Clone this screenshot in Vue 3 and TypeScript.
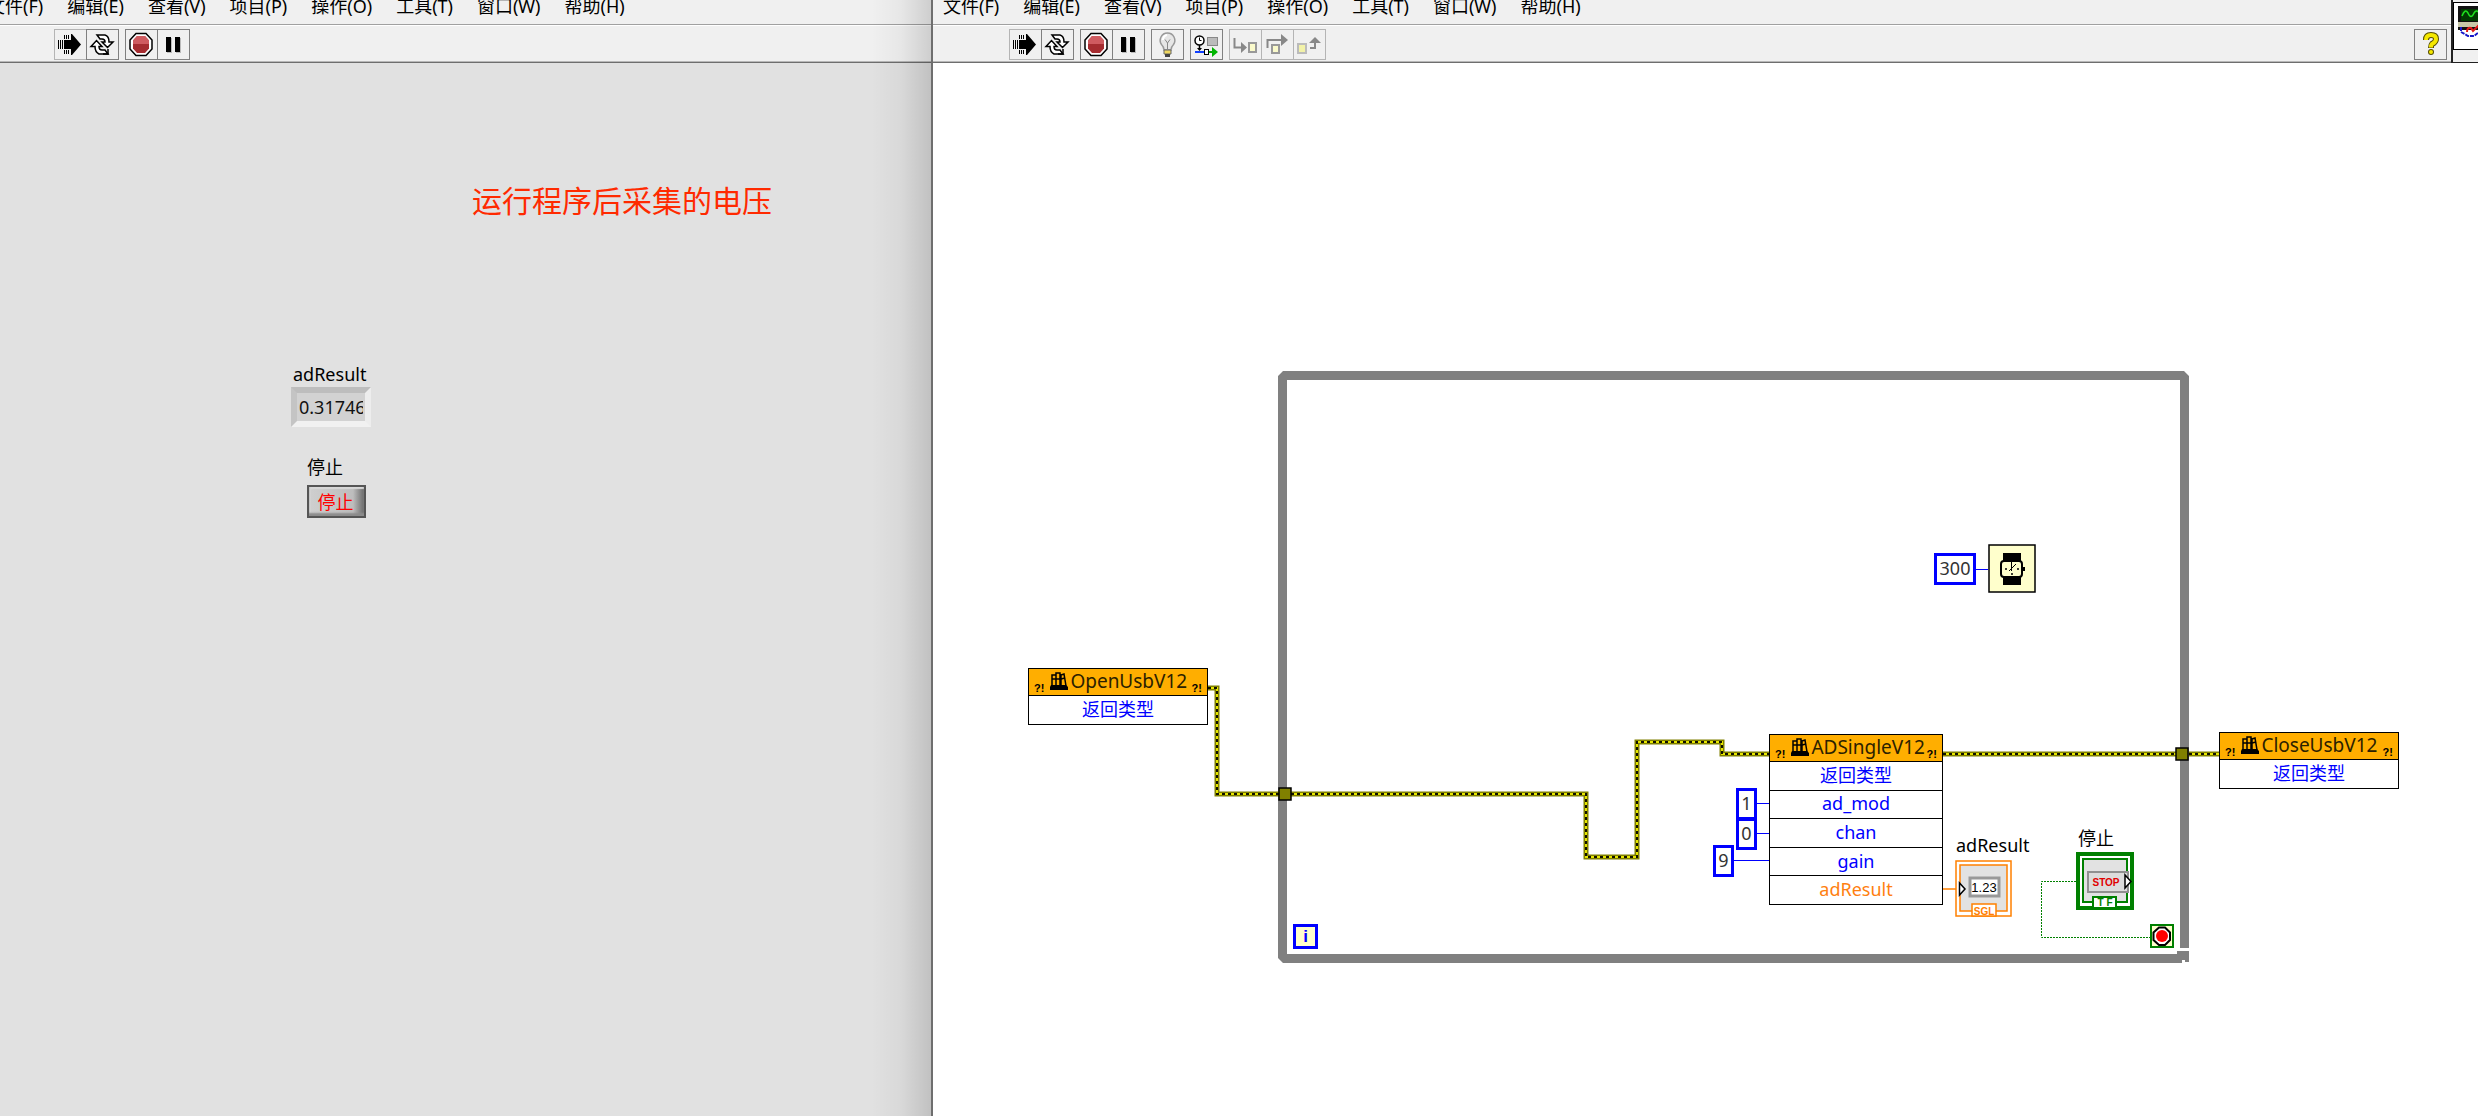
<script setup lang="ts">
interface ToolButton {
  icon: string
  label: string
  state?: 'dim' | 'flat'
}

interface VeeWindow {
  id: string
  menus: string[]
  groups: ToolButton[][]
}

interface Row {
  text: string
  tone: 'int' | 'float'
}

interface CallNode {
  title: string
  x: number
  y: number
  width: number
  height: number
  rows: Row[]
}

interface Constant {
  value: string
  x: number
  y: number
  width: number
}

const menus = ['文件(F)', '编辑(E)', '查看(V)', '项目(P)', '操作(O)', '工具(T)', '窗口(W)', '帮助(H)']

const runGroup: ToolButton[] = [
  { icon: 'run', label: '运行', state: 'flat' },
  { icon: 'loop', label: '连续运行' },
]
const stopGroup: ToolButton[] = [
  { icon: 'abort', label: '中止执行' },
  { icon: 'pause', label: '暂停' },
]

const windows: VeeWindow[] = [
  { id: 'panel', menus, groups: [runGroup, stopGroup] },
  {
    id: 'diagram',
    menus,
    groups: [
      runGroup,
      stopGroup,
      [{ icon: 'bulb', label: '高亮显示执行过程' }],
      [{ icon: 'retain', label: '保存连线值' }],
      [
        { icon: 'into', label: '单步步入', state: 'dim' },
        { icon: 'over', label: '单步步过', state: 'dim' },
        { icon: 'out', label: '单步步出', state: 'dim' },
      ],
    ],
  },
]

const ret: Row = { text: '返回类型', tone: 'int' }

const nodes: CallNode[] = [
  { title: 'OpenUsbV12', x: 95, y: 605, width: 180, height: 57, rows: [ret] },
  {
    title: 'ADSingleV12',
    x: 836,
    y: 671,
    width: 174,
    height: 171,
    rows: [
      ret,
      { text: 'ad_mod', tone: 'int' },
      { text: 'chan', tone: 'int' },
      { text: 'gain', tone: 'int' },
      { text: 'adResult', tone: 'float' },
    ],
  },
  { title: 'CloseUsbV12', x: 1286, y: 669, width: 180, height: 57, rows: [ret] },
]

const constants: Constant[] = [
  { value: '300', x: 1001, y: 490, width: 42 },
  { value: '1', x: 803, y: 725, width: 21 },
  { value: '0', x: 803, y: 755, width: 21 },
  { value: '9', x: 780, y: 782, width: 21 },
]

const refWires = [
  'M275 625H284V731H346',
  'M358 731H653V794H704V679H789V691H836',
  'M1010 691H1243',
  'M1256 691H1286',
]

const px = (n: number) => `${n}px`
</script>

<template>
  <main class="desk">
    <section v-for="win in windows" :key="win.id" class="window" :class="win.id">
      <header class="head">
        <div class="bars">
          <nav class="menubar">
            <button v-for="m in win.menus" :key="m" type="button" class="menu">{{ m }}</button>
          </nav>
          <div class="toolbar">
            <div v-for="(group, g) in win.groups" :key="g" class="group">
              <button
                v-for="b in group"
                :key="b.icon"
                type="button"
                class="tool"
                :class="b.state"
                :aria-label="b.label"
              >
                <svg width="31" height="29" viewBox="1 1 31 29">
                  <g v-if="b.icon === 'run'">
                    <path d="M10 11H17V5H18L27 15.500L18 26H17V20H10Z" />
                    <path d="M4.500 11V20M6.500 11V20M8.500 11V20M10.500 6V10M12.500 6V10M14.500 6V10M10.500 21V25M12.500 21V25M14.500 21V25" stroke="#000" />
                  </g>
                  <g v-else-if="b.icon === 'loop'" fill="#fff" stroke="#000" stroke-width="1.500">
                    <path d="M11 6H19Q23 7 23 13H27L21.500 18.500L16 13H19Q19 10 16 10H14Z" />
                    <path d="M22 25H13Q9 23 9 17.500H5L10.500 11.500L16 17.500H13Q13 21 16 21H19Z" />
                    <path d="M22 20V25H17" fill="none" />
                  </g>
                  <g v-else-if="b.icon === 'abort'">
                    <path d="M11 4.500H21L27 11V20L21 26.500H11L5 20V11Z" fill="#fff" stroke="#000" stroke-width="1.500" />
                    <path d="M12 7H20L24 11.500V19.500L20 24H12L8 19.500V11.500Z" fill="#a52c30" />
                    <path d="M12 7H20L24 11.500V15H8V11.500Z" fill="#cf5b60" />
                  </g>
                  <g v-else-if="b.icon === 'pause'">
                    <path d="M10 9H15V24H10ZM19 9H24V24H19Z" fill="#bbb" />
                    <path d="M9 8H14V23H9ZM18 8H23V23H18Z" />
                  </g>
                  <g v-else-if="b.icon === 'bulb'">
                    <path d="M13 21Q13 18 10.500 15.500Q8 12 10 8Q12 4 16.500 4Q21 4 23 8Q25 12 22.500 15.500Q20 18 20 21Z" fill="#e6e6e6" stroke="#999" stroke-width="1.500" />
                    <path d="M12 11Q12 7 16 6" fill="none" stroke="#fff" stroke-width="2" />
                    <path d="M16.500 20V14L14 10.500M16.500 14L19 10.500" fill="none" stroke="#888" />
                    <path d="M13 21H20V25H13Z" fill="#f0d860" stroke="#666" />
                    <path d="M14 25H19V28H14Z" fill="#444" />
                  </g>
                  <g v-else-if="b.icon === 'retain'">
                    <circle cx="9.500" cy="11.500" r="4.500" fill="#fff" stroke="#000" stroke-width="1.500" />
                    <path d="M9.500 8.500V11.500H11.500" fill="none" stroke="#000" />
                    <path d="M9.500 16V21" stroke="#000" stroke-width="1.500" />
                    <path d="M7 19H12L9.500 22Z" />
                    <rect x="17.500" y="8.500" width="10" height="8" fill="#bbb" stroke="#888" />
                    <path d="M5 23H14" stroke="#1040ff" stroke-width="2" />
                    <path d="M19 23H24" stroke="#0a0" stroke-width="2" />
                    <rect x="14.500" y="20.500" width="4" height="5" fill="#fff" stroke="#000" />
                    <path d="M22 18L28 23L22 28Z" fill="#00b400" />
                  </g>
                  <g v-else-if="b.icon === 'into'">
                    <path d="M5.500 9V18.500H14" fill="none" stroke="#888" stroke-width="2" />
                    <path d="M12 13L18 18.500L12 24Z" fill="#888" />
                    <rect x="20" y="14" width="7" height="9" fill="#fafacb" stroke="#999" stroke-width="2" />
                  </g>
                  <g v-else-if="b.icon === 'over'">
                    <path d="M6.500 19V11H21" fill="none" stroke="#888" stroke-width="2" />
                    <path d="M20 5L27 11L20 17Z" fill="#888" />
                    <rect x="11" y="16" width="7" height="8" fill="#fafacb" stroke="#999" stroke-width="2" />
                  </g>
                  <g v-else>
                    <path d="M17 19H22V12" fill="none" stroke="#888" stroke-width="2" />
                    <path d="M16 14L22 8L28 14Z" fill="#888" />
                    <rect x="5" y="15" width="8" height="9" fill="#f2f2a8" stroke="#bbb" stroke-width="2" />
                  </g>
                </svg>
              </button>
            </div>
            <button v-if="win.id === 'diagram'" type="button" class="tool help" aria-label="即时帮助">
              <svg width="31" height="29" viewBox="1 1 31 29">
                <path d="M12 11Q12 6 17 6Q22 6 22 10Q22 13 18 15Q17 16 17 19" fill="none" stroke="#554d00" stroke-width="6" />
                <circle cx="17" cy="23" r="3" fill="#554d00" />
                <path d="M12 11Q12 6 17 6Q22 6 22 10Q22 13 18 15Q17 16 17 18.500" fill="none" stroke="#f5e800" stroke-width="4" />
                <circle cx="17" cy="23" r="2" fill="#f5e800" />
              </svg>
            </button>
          </div>
        </div>
        <div v-if="win.id === 'diagram'" class="vi-icon">
          <svg width="25" height="46" viewBox="0 0 25 46">
            <rect x="4" y="3" width="24" height="24" fill="#111" />
            <rect x="4" y="19" width="24" height="5" fill="#c8c8a8" />
            <rect x="7" y="6" width="20" height="12" fill="#013a01" />
            <path d="M8 13Q11 5 14 10Q17 17 20 10Q23 5 26 12" fill="none" stroke="#1fe01f" stroke-width="1.500" />
            <path d="M7 24V29L14 33H20L25 29" fill="none" stroke="#1717c8" stroke-width="2" stroke-dasharray="4 1" />
            <path d="M13 29Q13 24 17 25L19 28L25 22" fill="none" stroke="#e01818" stroke-width="2" />
          </svg>
        </div>
      </header>

      <div v-if="win.id === 'panel'" class="surface front">
        <p class="note">运行程序后采集的电压</p>
        <div class="indicator">
          <label for="ad-result">adResult</label>
          <input id="ad-result" type="text" value="0.317466" readonly />
        </div>
        <div class="stop-control">
          <label for="stop">停止</label>
          <button id="stop" type="button">停止</button>
        </div>
      </div>

      <div v-else class="surface">
        <svg class="wires" width="1545" height="1053" viewBox="0 0 1545 1053" fill="none">
          <path d="M350 308H1251L1256 313V885H1247V317H354V891H1244V888H1256V899H1252V897H1249V900H350L345 895V313Z" fill="#808080" />
          <g v-for="d in refWires" :key="d">
            <path :d="d" stroke="#808000" stroke-width="5" />
            <path :d="d" stroke="#e8e800" stroke-width="2" />
            <path :d="d" stroke="#111100" stroke-width="2" stroke-dasharray="3 3" />
          </g>
          <g fill="#808000" stroke="#000" stroke-width="1.500">
            <rect x="346" y="725" width="12" height="12" />
            <rect x="1243" y="685" width="12" height="12" />
          </g>
          <path d="M1043 506.500H1055M824 740.500H836M824 770.500H836M801 797.500H836" stroke="#0000ff" />
          <path d="M1010 826H1023" stroke="#ff8000" stroke-width="1.500" />
          <path d="M1143 818.500H1108.500V874.500H1217" stroke="#008000" stroke-dasharray="2 1" />

          <g>
            <rect x="1056" y="482" width="46" height="47" fill="#ffffcc" stroke="#000" stroke-width="1.500" />
            <rect x="1070" y="490" width="18" height="32" fill="#000" />
            <rect x="1068" y="498" width="21" height="16" rx="3" fill="#ffffcc" stroke="#000" stroke-width="2" />
            <path d="M1078.500 499V508M1076 508L1083 501" stroke="#000" />
            <path d="M1072 506H1074M1084 506H1086M1078 511H1080" stroke="#000" stroke-width="1.500" />
            <path d="M1090 504H1092V508H1090Z" fill="#000" />
          </g>

          <g stroke="#ff8000" stroke-width="1.500">
            <rect x="1023" y="798" width="55" height="55" fill="#fff" />
            <rect x="1027" y="802" width="47" height="46" fill="#e2e2e2" />
            <rect x="1039" y="841" width="24" height="12" fill="#fff" />
          </g>
          <rect x="1037" y="815" width="29" height="18" fill="#fff" stroke="#999" stroke-width="3" />
          <path d="M1026.500 820V832L1032 826Z" fill="#fff" stroke="#000" stroke-width="1.500" />

          <rect x="1145" y="791" width="54" height="54" fill="#fff" stroke="#008000" stroke-width="4" />
          <rect x="1150" y="796" width="44" height="43" fill="#e2e2e2" stroke="#008000" stroke-width="2" />
          <rect x="1160" y="834" width="23" height="10" fill="#fff" />
          <path d="M1160 844V834H1183V844" stroke="#008000" stroke-width="2" />
          <rect x="1155" y="809" width="40" height="20" fill="#dcdcdc" stroke="#909090" stroke-width="2" />
          <path d="M1192 812V825L1198 818.500Z" fill="#fff" stroke="#000" stroke-width="1.500" />

          <rect x="1218" y="862" width="22" height="22" fill="#ffffcc" stroke="#008000" stroke-width="2" />
          <path d="M1226 864.500H1232L1237 869.500V877L1232 882H1226L1220.500 877V869.500Z" fill="#fff" stroke="#000" stroke-width="2" />
          <circle cx="1229" cy="873" r="6" fill="#ff0000" />

          <g class="glyphs">
            <text x="1051" y="829" font-size="13" fill="#000">1.23</text>
            <text x="1051" y="852" font-size="10" font-weight="700" fill="#ff8000">SGL</text>
            <text x="1173" y="823" font-size="10" font-weight="700" fill="#e00000">STOP</text>
            <text x="1172" y="843" font-size="10" font-weight="700" fill="#008000">T F</text>
          </g>
        </svg>

        <div
          v-for="n in nodes"
          :key="n.title"
          class="node"
          :style="{ left: px(n.x), top: px(n.y), width: px(n.width), height: px(n.height) }"
        >
          <div class="node-head">
            <b class="flag">?!</b>
            <svg width="18" height="18" viewBox="0 0 18 18">
              <path d="M2 3H6V14H2ZM6 1H10V14H6ZM11 3L14 2L16 14H11Z" fill="none" stroke="#000" stroke-width="1.500" />
              <path d="M2 7H10M11 7L15 6" stroke="#000" stroke-width="1.500" />
              <path d="M1 13H16L18 15V18H0V15Z" />
            </svg>
            <span>{{ n.title }}</span>
            <b class="flag end">?!</b>
          </div>
          <div v-for="r in n.rows" :key="r.text" class="node-row" :class="r.tone">{{ r.text }}</div>
        </div>

        <span
          v-for="c in constants"
          :key="c.value"
          class="constant"
          :style="{ left: px(c.x), top: px(c.y), width: px(c.width) }"
        >{{ c.value }}</span>

        <span class="iteration">i</span>
        <span class="tag result-tag">adResult</span>
        <span class="tag stop-tag">停止</span>
      </div>
    </section>
  </main>
</template>

<style>
body {
  margin: 0;
}
</style>

<style scoped>
.desk {
  display: flex;
  min-height: 100vh;
  overflow: hidden;
  color: #000;
  font: 18px/24px 'Noto Sans', 'Noto Sans CJK SC', sans-serif;
}

.window {
  display: flex;
  flex-direction: column;
  min-width: 0;
  overflow: hidden;
  position: relative;
}

.panel {
  flex: 931 1 0;
}

.panel::after {
  content: '';
  position: absolute;
  inset: 0 0 0 auto;
  width: 60px;
  background: linear-gradient(to right, transparent, rgba(0, 0, 0, 0.04) 50%, rgba(0, 0, 0, 0.14));
  pointer-events: none;
}

.diagram {
  flex: 1545 1 0;
  border-left: 2px solid #6e6e6e;
}

.head {
  display: flex;
  background: #f0f0f0;
}

.bars {
  flex: 1;
  min-width: 0;
}

.menubar {
  display: flex;
  gap: 24px;
  height: 24px;
  border-bottom: 1px solid #a0a0a0;
}

.panel .menubar {
  margin-left: -13px;
}

.diagram .menubar {
  padding-left: 10px;
}

.menu {
  flex: none;
  height: 24px;
  margin-top: -6px;
  padding: 0;
  border: 0;
  background: none;
  color: inherit;
  font: inherit;
}

.toolbar {
  display: flex;
  gap: 6px;
  height: 31px;
  padding: 3px 4px 2px 54px;
  border-top: 1px solid #fff;
  border-bottom: 1px solid #6e6e6e;
  box-shadow: inset 0 -1px #b8b8b8;
}

.diagram .toolbar {
  padding-left: 76px;
}

.group {
  display: flex;
}

.tool {
  width: 33px;
  height: 31px;
  padding: 0;
  border: 1px solid #808080;
  background: #f0f0f0;
}

.tool + .tool {
  margin-left: -1px;
}

.tool svg {
  display: block;
}

.tool.flat,
.tool.dim {
  border-color: #b4b4b4;
}

.help {
  margin-left: auto;
}

.vi-icon {
  width: 25px;
  padding-top: 2px;
  border-left: 2px solid #222;
  border-bottom: 1px solid #222;
}

.vi-icon svg {
  display: block;
  border: 1px solid #000;
  background: #fff;
}

.surface {
  flex: 1;
  position: relative;
  background: #fff;
}

.front {
  background: #e1e1e1;
}

.note {
  position: absolute;
  top: 120px;
  left: 472px;
  margin: 0;
  color: #ff2a00;
  font-size: 30px;
  line-height: 36px;
  white-space: nowrap;
}

.indicator,
.stop-control {
  position: absolute;
  display: flex;
  flex-direction: column;
  align-items: flex-start;
}

.indicator {
  top: 299px;
  left: 291px;
}

.indicator label {
  padding-left: 2px;
}

.indicator input {
  box-sizing: border-box;
  width: 80px;
  height: 40px;
  margin-top: 1px;
  padding: 0 2px;
  border: 6px solid;
  border-color: #bdbdbd #ededed #f1f1f1 #c4c4c4;
  background: #d2d2d2;
  color: #111;
  font: inherit;
  outline: 0;
}

.stop-control {
  top: 392px;
  left: 307px;
}

.stop-control button {
  width: 59px;
  height: 33px;
  margin-top: 6px;
  padding: 0 2px 0 0;
  border: 2px solid #555;
  background: linear-gradient(to right, #cfcfcf, #bdbdbd 80%, #6a6a6a);
  box-shadow: inset 0 -3px 2px #8c8c8c, inset 2px 2px 1px #d8d8d8;
  color: #ff0000;
  font: inherit;
}

.wires {
  position: absolute;
  top: 0;
  left: 0;
}

.glyphs {
  font-family: 'Liberation Sans', sans-serif;
  text-anchor: middle;
}

.node {
  position: absolute;
  box-sizing: border-box;
  display: flex;
  flex-direction: column;
  border: 1px solid #000;
  background: #fff;
}

.node-head {
  flex: 0 0 26px;
  display: flex;
  align-items: center;
  box-sizing: border-box;
  padding: 0 5px 2px;
  background: #ffae00;
  color: #2b2100;
  font-size: 19px;
}

.node-head svg {
  flex: none;
  margin: 0 2px 0 6px;
}

.flag {
  align-self: flex-end;
  color: #000;
  font: 700 11px/10px 'Liberation Sans', sans-serif;
}

.flag.end {
  margin-left: auto;
}

.node-row {
  flex: 1 1 0;
  display: flex;
  align-items: center;
  justify-content: center;
  box-sizing: border-box;
  min-height: 0;
  padding-bottom: 2px;
  border-top: 1px solid #000;
}

.int {
  color: #0000ff;
}

.float {
  color: #ff8010;
}

.constant {
  position: absolute;
  box-sizing: border-box;
  height: 32px;
  border: 3px solid #0000ff;
  background: #fff;
  color: #333;
  line-height: 25px;
  text-align: center;
}

.iteration {
  position: absolute;
  top: 861px;
  left: 360px;
  width: 19px;
  height: 19px;
  border: 3px solid #0000ff;
  background: #ffffcc;
  color: #0000ff;
  font: 700 17px/20px 'Liberation Sans', sans-serif;
  text-align: center;
}

.tag {
  position: absolute;
  white-space: nowrap;
}

.result-tag {
  top: 770px;
  left: 1023px;
}

.stop-tag {
  top: 763px;
  left: 1145px;
}
</style>
